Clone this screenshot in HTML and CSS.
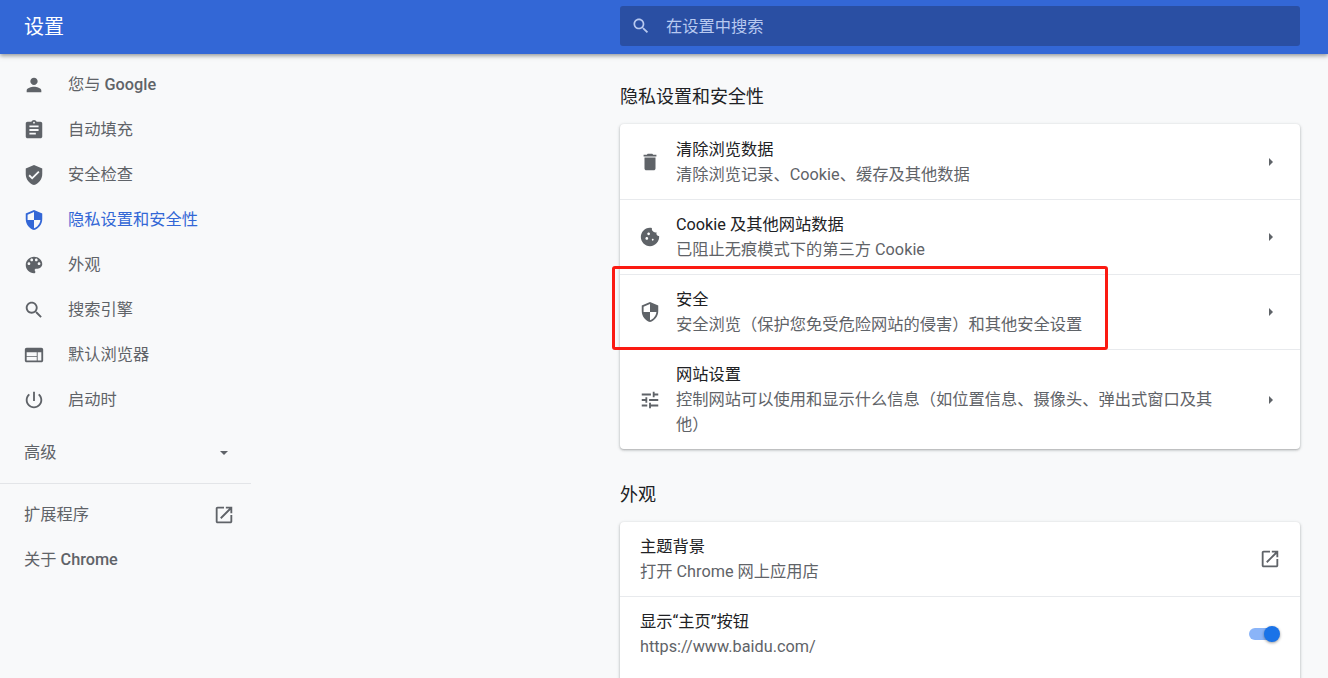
FILE: index.html
```html
<!DOCTYPE html>
<html lang="zh-CN">
<head>
  <meta charset="UTF-8">
  <meta name="viewport" content="width=device-width, initial-scale=1.0">
  <title>设置</title>
  <link rel="stylesheet" href="styles.css">
</head>
<body>
  <svg class="sprites" aria-hidden="true">
    <symbol id="i-person" viewBox="0 0 24 24"><path d="M12 12c2.21 0 4-1.79 4-4s-1.79-4-4-4-4 1.79-4 4 1.79 4 4 4zm0 2c-2.67 0-8 1.34-8 4v2h16v-2c0-2.66-5.33-4-8-4z"/></symbol>
    <symbol id="i-assignment" viewBox="0 0 24 24"><path d="M19 3h-4.18C14.4 1.84 13.3 1 12 1c-1.3 0-2.4.84-2.82 2H5c-1.1 0-2 .9-2 2v14c0 1.1.9 2 2 2h14c1.1 0 2-.9 2-2V5c0-1.1-.9-2-2-2zm-7 0c.55 0 1 .45 1 1s-.45 1-1 1-1-.45-1-1 .45-1 1-1zm2 14H7v-2h7v2zm3-4H7v-2h10v2zm0-4H7V7h10v2z"/></symbol>
    <symbol id="i-verified" viewBox="0 0 24 24"><path d="M12 1L3 5v6c0 5.55 3.84 10.74 9 12 5.16-1.26 9-6.45 9-12V5l-9-4zm-2 16l-4-4 1.41-1.41L10 14.17l6.59-6.59L18 9l-8 8z"/></symbol>
    <symbol id="i-security" viewBox="0 0 24 24"><path d="M12 1L3 5v6c0 5.55 3.84 10.74 9 12 5.16-1.26 9-6.45 9-12V5l-9-4zm0 10.99h7c-.53 4.12-3.28 7.79-7 8.94V12H5V6.3l7-3.11v8.8z"/></symbol>
    <symbol id="i-palette" viewBox="0 0 24 24"><path d="M12 3c-4.97 0-9 4.03-9 9s4.03 9 9 9c.83 0 1.5-.67 1.5-1.5 0-.39-.15-.74-.39-1.01-.23-.26-.38-.61-.38-.99 0-.83.67-1.5 1.5-1.5H16c2.76 0 5-2.24 5-5 0-4.42-4.03-8-9-8zm-5.5 9c-.83 0-1.5-.67-1.5-1.5S5.67 9 6.5 9 8 9.67 8 10.5 7.33 12 6.5 12zm3-4C8.67 8 8 7.33 8 6.5S8.67 5 9.5 5s1.5.67 1.5 1.5S10.33 8 9.5 8zm5 0c-.83 0-1.5-.67-1.5-1.5S13.67 5 14.5 5s1.5.67 1.5 1.5S15.33 8 14.5 8zm3 4c-.83 0-1.5-.67-1.5-1.5S16.67 9 17.5 9s1.5.67 1.5 1.5-.67 1.5-1.5 1.5z"/></symbol>
    <symbol id="i-search" viewBox="0 0 24 24"><path d="M15.5 14h-.79l-.28-.27C15.41 12.59 16 11.11 16 9.5 16 5.91 13.09 3 9.5 3S3 5.91 3 9.5 5.91 16 9.5 16c1.61 0 3.09-.59 4.23-1.57l.27.28v.79l5 4.99L20.49 19l-4.99-5zm-6 0C7.01 14 5 11.99 5 9.5S7.01 5 9.5 5 14 7.01 14 9.5 11.99 14 9.5 14z"/></symbol>
    <symbol id="i-web" viewBox="0 0 24 24"><path d="M20 4H4c-1.1 0-1.99.9-1.99 2L2 18c0 1.1.9 2 2 2h16c1.1 0 2-.9 2-2V6c0-1.1-.9-2-2-2zm-5 14H4v-4h11v4zm0-5H4V9h11v4zm5 5h-4V9h4v9z"/></symbol>
    <symbol id="i-power" viewBox="0 0 24 24"><path d="M13 3h-2v10h2V3zm4.83 2.17l-1.42 1.42C17.99 7.86 19 9.81 19 12c0 3.87-3.13 7-7 7s-7-3.13-7-7c0-2.19 1.01-4.14 2.58-5.42L6.17 5.17C4.23 6.82 3 9.26 3 12c0 4.97 4.03 9 9 9s9-4.03 9-9c0-2.74-1.23-5.18-3.17-6.83z"/></symbol>
    <symbol id="i-open" viewBox="0 0 24 24"><path d="M19 19H5V5h7V3H5c-1.11 0-2 .9-2 2v14c0 1.1.89 2 2 2h14c1.1 0 2-.9 2-2v-7h-2v7zM14 3v2h3.59l-9.83 9.83 1.41 1.41L19 6.41V10h2V3h-7z"/></symbol>
    <symbol id="i-delete" viewBox="0 0 24 24"><path d="M6 19c0 1.1.9 2 2 2h8c1.1 0 2-.9 2-2V7H6v12zM19 4h-3.5l-1-1h-5l-1 1H5v2h14V4z"/></symbol>
    <symbol id="i-cookie" viewBox="0 0 24 24"><path d="M21.95 10.99c-1.79-.03-3.7-1.95-2.68-4.22-2.98 1-5.77-1.59-5.19-4.56C6.95.71 2 6.58 2 12c0 5.52 4.48 10 10 10 5.89 0 10.54-5.08 9.95-11.01zM8.5 15c-.83 0-1.5-.67-1.5-1.5S7.67 12 8.5 12s1.5.67 1.5 1.5S9.33 15 8.5 15zm2-5C9.67 10 9 9.33 9 8.5S9.67 7 10.5 7s1.5.67 1.5 1.5-.67 1.5-1.5 1.5zm4.5 6c-.55 0-1-.45-1-1s.45-1 1-1 1 .45 1 1-.45 1-1 1z"/></symbol>
    <symbol id="i-tune" viewBox="0 0 24 24"><path d="M3 17v2h6v-2H3zM3 5v2h10V5H3zm10 16v-2h8v-2h-8v-2h-2v6h2zM7 9v2H3v2h4v2h2V9H7zm14 4v-2H11v2h10zm-6-4h2V7h4V5h-4V3h-2v6z"/></symbol>
  </svg>

  <header class="topbar">
    <h1 class="topbar-title">设置</h1>
    <div class="search">
      <svg class="icon search-icon"><use href="#i-search"/></svg>
      <span class="search-text">在设置中搜索</span>
    </div>
  </header>

  <div class="page">
    <nav class="sidebar">
      <a class="nav-item"><svg class="icon"><use href="#i-person"/></svg><span>您与 <b class="latin">Google</b></span></a>
      <a class="nav-item"><svg class="icon"><use href="#i-assignment"/></svg><span>自动填充</span></a>
      <a class="nav-item"><svg class="icon"><use href="#i-verified"/></svg><span>安全检查</span></a>
      <a class="nav-item active"><svg class="icon"><use href="#i-security"/></svg><span>隐私设置和安全性</span></a>
      <a class="nav-item"><svg class="icon"><use href="#i-palette"/></svg><span>外观</span></a>
      <a class="nav-item"><svg class="icon"><use href="#i-search"/></svg><span>搜索引擎</span></a>
      <a class="nav-item"><svg class="icon"><use href="#i-web"/></svg><span>默认浏览器</span></a>
      <a class="nav-item"><svg class="icon"><use href="#i-power"/></svg><span>启动时</span></a>
      <div class="nav-advanced"><span>高级</span><i class="arrow-down"></i></div>
      <div class="nav-rule"></div>
      <a class="nav-link"><span>扩展程序</span><svg class="icon"><use href="#i-open"/></svg></a>
      <a class="nav-link"><span>关于 <b class="latin">Chrome</b></span></a>
    </nav>

    <main class="content">
      <h2 class="section-title">隐私设置和安全性</h2>
      <section class="card">
        <div class="row">
          <svg class="icon"><use href="#i-delete"/></svg>
          <div class="row-text">
            <div class="row-title">清除浏览数据</div>
            <div class="row-sub">清除浏览记录、Cookie、缓存及其他数据</div>
          </div>
          <i class="arrow-right"></i>
        </div>
        <div class="row">
          <svg class="icon"><use href="#i-cookie"/></svg>
          <div class="row-text">
            <div class="row-title">Cookie 及其他网站数据</div>
            <div class="row-sub">已阻止无痕模式下的第三方 Cookie</div>
          </div>
          <i class="arrow-right"></i>
        </div>
        <div class="row">
          <svg class="icon"><use href="#i-security"/></svg>
          <div class="row-text">
            <div class="row-title">安全</div>
            <div class="row-sub">安全浏览（保护您免受危险网站的侵害）和其他安全设置</div>
          </div>
          <i class="arrow-right"></i>
        </div>
        <div class="row">
          <svg class="icon"><use href="#i-tune"/></svg>
          <div class="row-text">
            <div class="row-title">网站设置</div>
            <div class="row-sub">控制网站可以使用和显示什么信息（如位置信息、摄像头、弹出式窗口及其他）</div>
          </div>
          <i class="arrow-right"></i>
        </div>
        <div class="callout"></div>
      </section>

      <h2 class="section-title second">外观</h2>
      <section class="card card-open">
        <div class="row plain">
          <div class="row-text">
            <div class="row-title">主题背景</div>
            <div class="row-sub">打开 Chrome 网上应用店</div>
          </div>
          <svg class="icon"><use href="#i-open"/></svg>
        </div>
        <div class="row plain">
          <div class="row-text">
            <div class="row-title">显示“主页”按钮</div>
            <div class="row-sub">https://www.baidu.com/</div>
          </div>
          <div class="toggle"><span class="toggle-knob"></span></div>
        </div>
      </section>
    </main>
  </div>
</body>
</html>
```

FILE: styles.css
```css
html, body {
  height: 678px;
  overflow: hidden;
}
body {
  margin: 0;
  background: #f8f9fa;
  color: #202124;
  font-family: Roboto, "Noto Sans CJK SC", sans-serif;
  font-size: 16.25px;
  line-height: 25px;
}
.sprites {
  display: none;
}
.icon {
  display: block;
  flex: none;
  width: 22px;
  height: 22px;
  fill: #5f6368;
}
.latin {
  font-weight: 500;
}

/* top bar */
.topbar {
  position: relative;
  z-index: 1;
  display: flex;
  align-items: center;
  height: 54px;
  background: #3367d6;
  box-shadow: 0 2px 4px rgba(60,64,67,0.5);
}
.topbar-title {
  width: 596px;
  margin: 1px 0 0 24px;
  color: #fff;
  font-size: 20px;
  font-weight: 400;
}
.search {
  display: flex;
  align-items: center;
  width: 680px;
  height: 40px;
  margin-bottom: 2px;
  padding-left: 11px;
  box-sizing: border-box;
  background: #2a4fa3;
  border-radius: 3px;
}
.search-icon {
  width: 20px;
  height: 20px;
  fill: #b8c9f0;
}
.search-text {
  margin-left: 15px;
  color: #b8c9f0;
}

/* layout */
.page {
  display: flex;
}
.sidebar {
  flex: none;
  width: 251px;
  padding-top: 8px;
  color: #5f6368;
}
.content {
  flex: none;
  width: 680px;
  margin-left: 369px;
}

/* sidebar */
.nav-item {
  display: flex;
  align-items: center;
  gap: 23px;
  height: 45px;
  padding-left: 23px;
}
.nav-item.active {
  color: #3367d6;
}
.nav-item.active .icon {
  fill: #3367d6;
}
.nav-advanced {
  display: flex;
  align-items: center;
  justify-content: space-between;
  height: 45px;
  margin-top: 8px;
  padding: 0 23px 0 24px;
}
.arrow-down {
  width: 0;
  height: 0;
  border: 4.5px solid transparent;
  border-top-color: #5f6368;
  border-bottom-width: 0;
}
.nav-rule {
  height: 1px;
  margin-top: 8px;
  background: #e3e5e8;
}
.nav-link {
  display: flex;
  align-items: center;
  justify-content: space-between;
  height: 45px;
  padding: 0 16px 0 24px;
}
.nav-rule + .nav-link {
  margin-top: 8px;
}

/* main column */
.section-title {
  height: 40px;
  margin: 0;
  padding-top: 30px;
  font-size: 18px;
  font-weight: 400;
}
.section-title.second {
  padding-top: 33px;
}
.card {
  position: relative;
  background: #fff;
  border-radius: 4px;
  box-shadow: 0 1px 2px rgba(60,64,67,0.3), 0 1px 3px 1px rgba(60,64,67,0.12);
}
.card-open {
  padding-bottom: 30px;
}
.row {
  display: flex;
  align-items: center;
  padding: 12px 27px 12px 19px;
  border-top: 1px solid #e8eaed;
}
.row:first-child {
  border-top-color: transparent;
}
.row.plain {
  padding: 12px 19px 12px 20px;
}
.row.plain:first-child {
  border-top: 0;
}
.row-text {
  flex: 1;
  min-width: 0;
  margin-left: 15px;
  padding-right: 50px;
}
.plain .row-text {
  margin-left: 0;
}
.row-sub {
  color: #5f6368;
}
.arrow-right {
  flex: none;
  width: 0;
  height: 0;
  border: 4.5px solid transparent;
  border-left-color: #5f6368;
  border-right-width: 0;
}

/* red annotation round the security row */
.callout {
  position: absolute;
  left: -8px;
  top: 142px;
  width: 496px;
  height: 84px;
  box-sizing: border-box;
  border: 3px solid #fb1a12;
  border-radius: 3px;
}

/* toggle */
.toggle {
  position: relative;
  flex: none;
  width: 24px;
  height: 12px;
  margin-right: 8px;
  background: #8ab4f8;
  border-radius: 6px;
}
.toggle-knob {
  position: absolute;
  right: -7px;
  top: -2px;
  width: 16px;
  height: 16px;
  background: #1a73e8;
  border-radius: 50%;
  box-shadow: 0 1px 3px rgba(0,0,0,0.4);
}
```
